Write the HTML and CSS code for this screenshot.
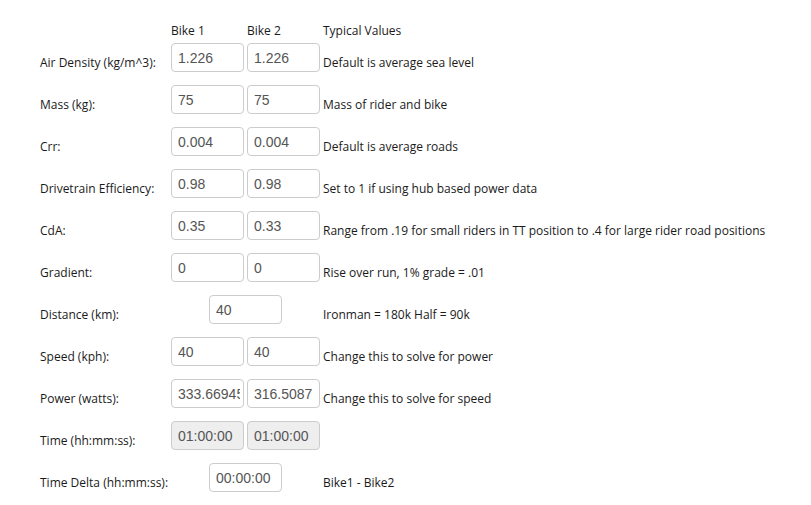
FILE: index.html
```html
<!DOCTYPE html>
<html>
<head>
<meta charset="utf-8">
<link rel="stylesheet" href="styles.css">
</head>
<body>
<form class="calc">
  <div class="row head">
    <span></span><span>Bike 1</span><span>Bike 2</span><span>Typical Values</span>
  </div>
  <div class="row">
    <label class="lbl">Air Density (kg/m^3):</label>
    <input class="fld" type="text" value="1.226">
    <input class="fld" type="text" value="1.226">
    <span class="note">Default is average sea level</span>
  </div>
  <div class="row">
    <label class="lbl">Mass (kg):</label>
    <input class="fld" type="text" value="75">
    <input class="fld" type="text" value="75">
    <span class="note">Mass of rider and bike</span>
  </div>
  <div class="row">
    <label class="lbl">Crr:</label>
    <input class="fld" type="text" value="0.004">
    <input class="fld" type="text" value="0.004">
    <span class="note">Default is average roads</span>
  </div>
  <div class="row">
    <label class="lbl">Drivetrain Efficiency:</label>
    <input class="fld" type="text" value="0.98">
    <input class="fld" type="text" value="0.98">
    <span class="note">Set to 1 if using hub based power data</span>
  </div>
  <div class="row">
    <label class="lbl">CdA:</label>
    <input class="fld" type="text" value="0.35">
    <input class="fld" type="text" value="0.33">
    <span class="note">Range from .19 for small riders in TT position to .4 for large rider road positions</span>
  </div>
  <div class="row">
    <label class="lbl">Gradient:</label>
    <input class="fld" type="text" value="0">
    <input class="fld" type="text" value="0">
    <span class="note">Rise over run, 1% grade = .01</span>
  </div>
  <div class="row">
    <label class="lbl">Distance (km):</label>
    <input class="fld span2" type="text" value="40">
    <span class="note">Ironman = 180k Half = 90k</span>
  </div>
  <div class="row">
    <label class="lbl">Speed (kph):</label>
    <input class="fld" type="text" value="40">
    <input class="fld" type="text" value="40">
    <span class="note">Change this to solve for power</span>
  </div>
  <div class="row">
    <label class="lbl">Power (watts):</label>
    <input class="fld" type="text" value="333.669458">
    <input class="fld" type="text" value="316.5087">
    <span class="note">Change this to solve for speed</span>
  </div>
  <div class="row">
    <label class="lbl">Time (hh:mm:ss):</label>
    <input class="fld ro" type="text" value="01:00:00" readonly>
    <input class="fld ro" type="text" value="01:00:00" readonly>
    <span class="note"></span>
  </div>
  <div class="row">
    <label class="lbl">Time Delta (hh:mm:ss):</label>
    <input class="fld span2" type="text" value="00:00:00">
    <span class="note">Bike1 - Bike2</span>
  </div>
</form>
</body>
</html>
```
FILE: styles.css
```css
html, body {
  margin: 0;
  padding: 0;
  background: #fff;
}
body {
  font-family: "Open Sans", "Liberation Sans", sans-serif;
  font-size: 12px;
  line-height: 16px;
  color: #1a1a1a;
}
.calc {
  padding: 23px 0 0 40px;
}
.row {
  display: grid;
  grid-template-columns: 128px 73px 73px 1fr;
  column-gap: 3px;
  height: 42px;
  align-items: start;
}
.row.head {
  height: 18px;
}
.lbl, .note {
  padding-top: 14px;
  white-space: nowrap;
}
.fld {
  box-sizing: border-box;
  width: 73px;
  height: 29px;
  margin: 2px 0 0 0;
  padding: 1px 3px 0 6px;
  border: 1px solid #ccc;
  border-radius: 4px;
  background: #fff;
  font-family: "Liberation Sans", Arial, sans-serif;
  font-size: 14px;
  color: #555;
  outline: none;
}
.fld.ro {
  background: #eee;
}
.fld.span2 {
  grid-column: 2 / 4;
  justify-self: center;
}
```
